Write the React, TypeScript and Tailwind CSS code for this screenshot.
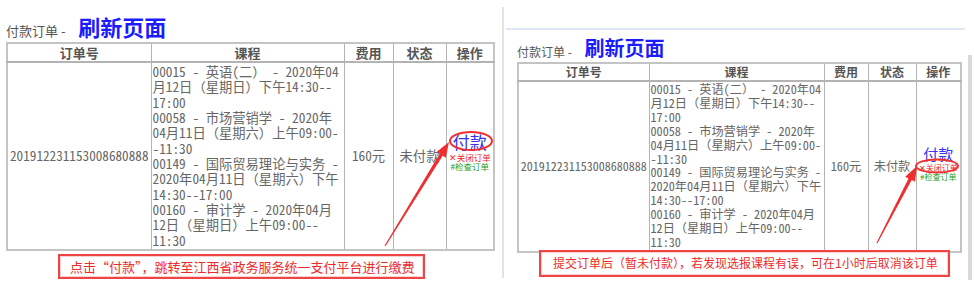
import React from 'react'

const courseLines = [
  '00015 - 英语(二） - 2020年04',
  '月12日（星期日）下午14:30--',
  '17:00',
  '00058 - 市场营销学 - 2020年',
  '04月11日（星期六）上午09:00-',
  '-11:30',
  '00149 - 国际贸易理论与实务 -',
  '2020年04月11日（星期六）下午',
  '14:30--17:00',
  '00160 - 审计学 - 2020年04月',
  '12日（星期日）上午09:00--',
  '11:30',
]

const songFont = "font-['Noto_Sans_Mono_CJK_SC','Liberation_Serif','Noto_Sans_CJK_SC',serif]"
const sansFont = "font-['Noto_Sans_CJK_SC','Liberation_Sans',sans-serif]"

type Pt = [number, number]

// red annotation arrow, tapered shaft + head
const Arrow = ({ tail, tip }: { tail: Pt; tip: Pt }) => {
  const dx = tip[0] - tail[0]
  const dy = tip[1] - tail[1]
  const len = Math.hypot(dx, dy)
  const ux = dx / len
  const uy = dy / len
  const nx = -uy
  const ny = ux
  const bx = tip[0] - ux * 15
  const by = tip[1] - uy * 15
  const p = (x: number, y: number) => `${x.toFixed(1)},${y.toFixed(1)}`
  const pts = [
    p(tail[0] + nx * 0.6, tail[1] + ny * 0.6),
    p(bx + nx * 1.8, by + ny * 1.8),
    p(bx + nx * 5.5, by + ny * 5.5),
    p(tip[0], tip[1]),
    p(bx - nx * 5.5, by - ny * 5.5),
    p(bx - nx * 1.8, by - ny * 1.8),
    p(tail[0] - nx * 0.6, tail[1] - ny * 0.6),
  ]
  return <polygon points={pts.join(' ')} fill="#ef2f2f" />
}

const OrderTable = ({ small }: { small?: boolean }) => {
  const cols = small ? [131, 175, 44, 48, 45] : [144, 193, 49, 53, 48]
  const th = `border border-[#b3b3b3] border-b-2 font-bold text-[#555] text-center ${sansFont} ${
    small ? 'text-[12px] h-[18px] leading-[16px]' : 'text-[13px] h-[19px] leading-[17px]'
  }`
  const td = `border border-[#b3b3b3] align-middle text-[#666] ${songFont}`
  return (
    <table
      className={`table-fixed border-collapse border-2 border-[#c4c4c4] ${small ? 'w-[443px]' : 'w-[487px]'}`}
    >
      <colgroup>
        {cols.map((w, i) => (
          <col key={i} style={{ width: w }} />
        ))}
      </colgroup>
      <thead>
        <tr>
          <th className={th}>订单号</th>
          <th className={th}>课程</th>
          <th className={th}>费用</th>
          <th className={th}>状态</th>
          <th className={th}>操作</th>
        </tr>
      </thead>
      <tbody>
        <tr>
          <td className={`${td} text-center whitespace-nowrap ${small ? 'text-[12px]' : 'text-[13.2px]'}`}>
            201912231153008680888
          </td>
          <td className={`${td} px-px py-px ${small ? 'text-[12.2px] leading-[13.9px]' : 'text-[13.3px] leading-[15.33px]'}`}>
            {courseLines.map((l, i) => (
              <div key={i} className="whitespace-nowrap">
                {l}
              </div>
            ))}
          </td>
          <td className={`${td} text-center ${small ? 'text-[12.2px]' : 'text-[13.3px]'}`}>160元</td>
          <td className={`${td} text-center ${small ? 'text-[12.2px]' : 'text-[13.3px]'}`}>未付款</td>
          <td className={`${td} text-center`}>
            <div className={`flex flex-col items-center ${sansFont} ${small ? 'mb-[6px]' : 'mb-[8px]'}`}>
              <span
                className={`text-[#3535f5] ${songFont} ${
                  small ? 'text-[15px] leading-[17px]' : 'text-[17px] leading-[18px]'
                }`}
              >
                付款
              </span>
              <span
                className={`text-[#f02626] whitespace-nowrap ${
                  small ? 'text-[8px] leading-[9px] mt-[1px]' : 'text-[8.5px] leading-[9px] mt-[2px]'
                }`}
              >
                ✕关闭订单
              </span>
              <span
                className={`text-[#22a022] whitespace-nowrap ${
                  small ? 'text-[8px] leading-[9px]' : 'text-[8.5px] leading-[9px]'
                }`}
              >
                #检查订单
              </span>
            </div>
          </td>
        </tr>
      </tbody>
    </table>
  )
}

const Title = ({ small }: { small?: boolean }) => (
  <div className={`flex items-end ${small ? 'h-[32px] pb-[3px]' : 'h-[28px] pb-[4px]'}`}>
    <span className={`text-[#555] ${sansFont} ${small ? 'text-[12px] leading-[14px]' : 'text-[13px] leading-[15px]'}`}>
      付款订单 -&nbsp;
    </span>
    <span
      className={`font-bold text-[#1b1bff] ${sansFont} ${
        small ? 'text-[20px] leading-[22px] ml-[10px]' : 'text-[22px] leading-[24px] ml-[10px]'
      }`}
    >
      刷新页面
    </span>
  </div>
)

export default function App() {
  return (
    <div className="relative flex w-[974px] h-[287px] overflow-hidden bg-white">
      <div className="w-[502px] shrink-0 pl-[6px] pt-[14px]">
        <Title />
        <OrderTable />
        <div
          className={`ml-[52px] mt-[3px] flex h-[25px] w-[367px] items-center border-2 border-[#f04444] pl-[10px] text-[13px] text-[#ee2b2b] shadow-[inset_0_0_0_1px_#fbd0d0] ${sansFont}`}
        >
          点击“付款”，跳转至江西省政务服务统一支付平台进行缴费
        </div>
      </div>

      <div className="mt-[7px] h-[271px] w-[2px] shrink-0 bg-[#e3e3e3]" />
      <div className="w-[2px] shrink-0" />

      <div className="w-[462px] shrink-0 pt-[28px]">
        <div className="h-[2px] w-[459px] bg-[#dde8f4]" />
        <div className="pl-[11px]">
          <Title small />
          <OrderTable small />
          <div
            className={`ml-[22px] mt-[-3px] flex h-[27px] w-[411px] items-center border-2 border-[#f04444] pl-[12px] text-[12px] text-[#ee2b2b] shadow-[inset_0_0_0_1px_#fbd0d0] ${sansFont}`}
          >
            提交订单后（暂未付款），若发现选报课程有误，可在1小时后取消该订单
          </div>
        </div>
      </div>

      <div className="mt-[55px] h-[225px] w-[4px] shrink-0 bg-[#d9d9d9]" />

      <svg className="pointer-events-none absolute inset-0" width={974} height={287}>
        <ellipse cx={471} cy={141} rx={21} ry={9} fill="none" stroke="#ef2f2f" strokeWidth={2} />
        <ellipse cx={937} cy={166} rx={21} ry={6.5} fill="none" stroke="#ef2f2f" strokeWidth={2} />
        <Arrow tail={[385, 246]} tip={[449, 142]} />
        <Arrow tail={[877, 243]} tip={[917, 166]} />
      </svg>
    </div>
  )
}
